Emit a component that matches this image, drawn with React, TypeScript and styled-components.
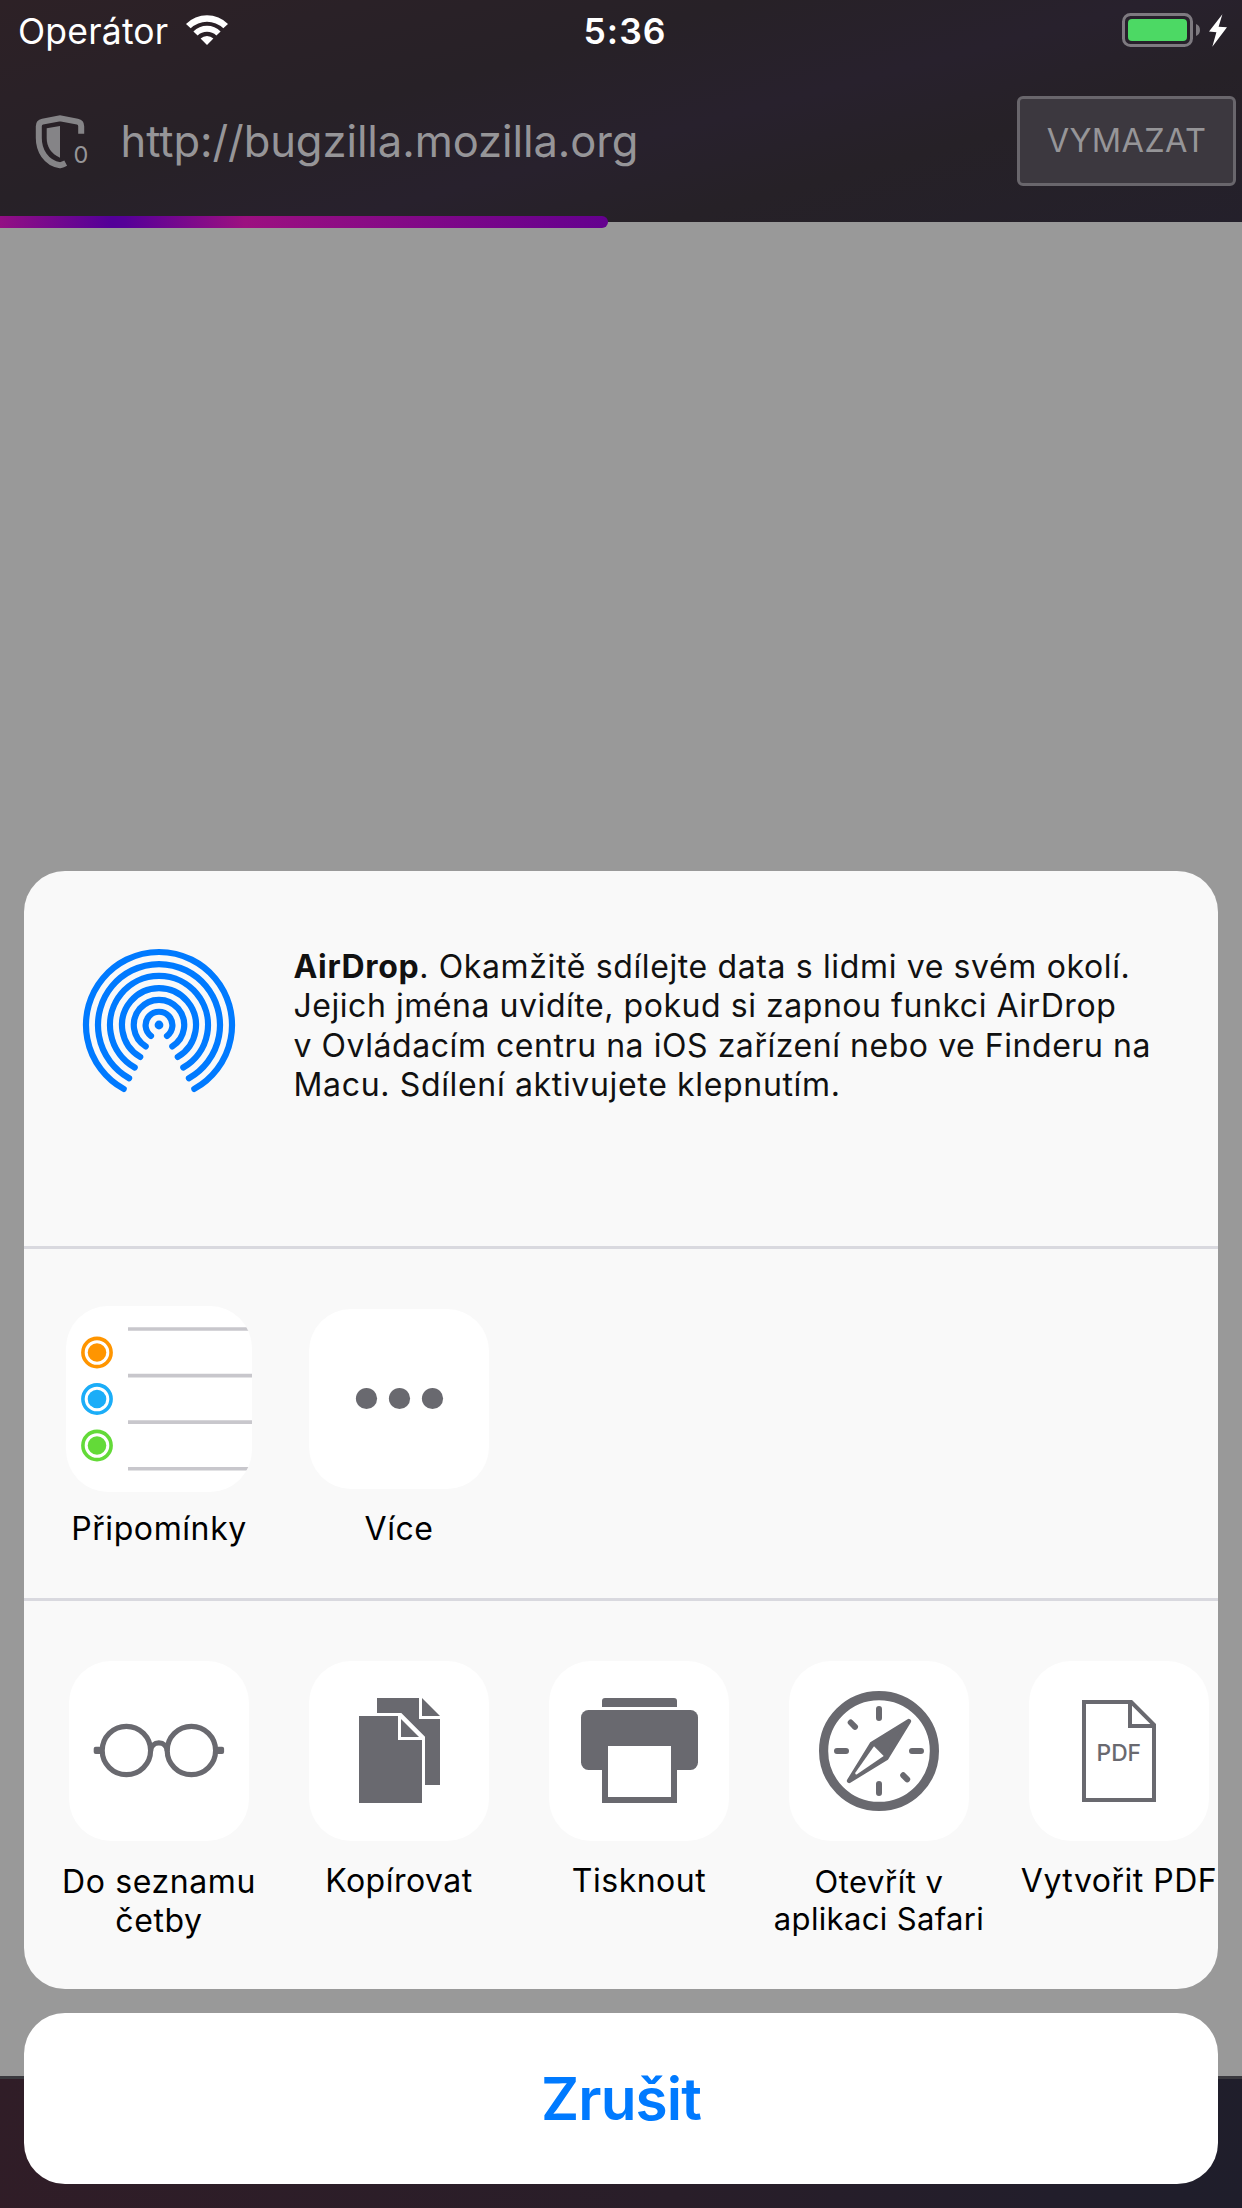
import React from "react";
import styled, { createGlobalStyle } from "styled-components";

const GlobalStyle = createGlobalStyle`
  *, *::before, *::after { box-sizing: border-box; }
  html, body { margin: 0; padding: 0; }
  body { width: 1242px; height: 2208px; overflow: hidden; background: #999; }
  button { appearance: none; border: 0; background: none; padding: 0; margin: 0; font: inherit; color: inherit; }
  svg { display: block; }
`;

const glyph = "#69696f";

const Screen = styled.div`
  position: relative;
  display: flex;
  flex-direction: column;
  width: 1242px;
  height: 2208px;
  overflow: hidden;
  background: #999999;
  font-family: Inter, Roboto, "Liberation Sans", sans-serif;
`;

const Header = styled.header`
  display: flex;
  flex-direction: column;
  flex: 0 0 222px;
  background: linear-gradient(165deg, #2d2126 0%, #2a2127 18%, #272127 36%, #28212d 56%, #262127 72%, #24202b 100%);
`;

const StatusBar = styled.div`
  display: grid;
  grid-template-columns: 1fr auto 1fr;
  height: 60px;
  padding: 0 14px 0 18px;
  color: #fff;
`;

const Carrier = styled.div`
  display: flex;
  align-items: flex-start;
  font-size: 35.5px;
  line-height: 44px;
  padding-top: 10px;
  letter-spacing: 0.2px;
  svg { margin: 4px 0 0 17px; }
`;

const CarrierName = styled.span`
  width: 150px;
  white-space: nowrap;
`;

const Clock = styled.div`
  padding: 10px 0 0 4px;
  font-size: 35.5px;
  line-height: 44px;
  font-weight: 600;
  letter-spacing: 1px;
`;

const Power = styled.div`
  display: flex;
  justify-content: flex-end;
  align-items: flex-start;
  padding-top: 13px;
`;

const UrlBar = styled.div`
  display: flex;
  align-items: center;
  height: 162px;
  padding: 0 6px 0 30px;
  color: #969598;
`;

const UrlText = styled.div`
  flex: 1;
  padding-left: 28.5px;
  font-size: 43.5px;
  line-height: 54px;
  letter-spacing: -0.07px;
`;

const EraseButton = styled.button`
  width: 219px;
  height: 90px;
  border: 3px solid #69666c;
  border-radius: 6px;
  background: #3c383f;
  color: #969598;
  font-size: 32.5px;
  line-height: 40px;
  letter-spacing: 0.3px;
`;

const Progress = styled.div`
  height: 12px;
  width: 608px;
  margin-top: -6px;
  border-radius: 0 6px 6px 0;
  background: linear-gradient(90deg, #930f84 0, #530098 112px, #560098 125px, #9c1080 245px, #64008f 608px);
`;

const PageBody = styled.main`
  flex: 1;
`;

const Toolbar = styled.footer`
  flex: 0 0 132px;
  border-top: 3px solid #3a393e;
  background: linear-gradient(100deg, #301d27 0%, #291e29 55%, #221e2b 85%, #1f1e2b 100%);
`;

const SheetLayer = styled.div`
  position: absolute;
  inset: 0;
  display: flex;
  flex-direction: column;
  justify-content: flex-end;
  gap: 24px;
  padding: 24px;
`;

const Sheet = styled.section`
  display: flex;
  flex-direction: column;
  height: 1118px;
  overflow: hidden;
  border-radius: 41px;
  background: #f9f9f9;
`;

const AirDropRow = styled.div`
  display: flex;
  align-items: flex-start;
  height: 378px;
  padding: 76px 0 0 57px;
  border-bottom: 3px solid #d9d9df;
`;

const AirDropCopy = styled.p`
  margin: 0 0 0 55.5px;
  font-size: 32px;
  line-height: 39.3px;
  color: #111;
  white-space: nowrap;
`;

const Line = styled.span<{ $track: number }>`
  display: block;
  letter-spacing: ${(p) => p.$track}px;
`;

const Row = styled.div<{ $height: number; $divider?: boolean }>`
  display: flex;
  height: ${(p) => p.$height}px;
  padding: 60px 0 0 15px;
  border-bottom: ${(p) => (p.$divider ? "3px solid #d9d9df" : "0")};
`;

const Item = styled.button`
  display: flex;
  flex: 0 0 240px;
  flex-direction: column;
  align-items: center;
`;

const Tile = styled.span<{ $large?: boolean }>`
  display: block;
  width: ${(p) => (p.$large ? 186 : 180)}px;
  height: ${(p) => (p.$large ? 186 : 180)}px;
  margin: ${(p) => (p.$large ? "-3px 0" : "0")};
  border-radius: 42px;
  overflow: hidden;
  background: #fff;
`;

const Label = styled.span<{ $size?: number; $leading?: number; $top?: number }>`
  margin-top: ${(p) => p.$top ?? 20}px;
  font-size: ${(p) => p.$size ?? 32}px;
  line-height: ${(p) => p.$leading ?? 39}px;
  color: #000;
  text-align: center;
  white-space: nowrap;
`;

const CancelButton = styled.button`
  height: 171px;
  border-radius: 41px;
  background: #fff;
  color: #007aff;
  font-size: 58.5px;
  line-height: 72px;
  font-weight: 600;
  letter-spacing: -0.9px;
`;

const WifiIcon = () => (
  <svg width="44" height="32" viewBox="185 14 44 32" fill="#fff">
    <path d="M186 24A29.8 29.8 0 0 1 228 24L223.3 28.2A23.8 23.8 0 0 0 190.7 28.2Z" />
    <path d="M193.4 31.4A19 19 0 0 1 220.6 31.4L216.4 35.4A13.6 13.6 0 0 0 197.6 35.4Z" />
    <path d="M200.6 38.6A9.2 9.2 0 0 1 213.4 38.6L207 45Z" />
  </svg>
);

const BatteryIcon = () => (
  <svg width="106" height="35" viewBox="1122 13 106 35">
    <rect x="1123.5" y="14.5" width="68" height="31" rx="7" fill="none" stroke="#7e7a80" strokeWidth="3" />
    <rect x="1128" y="19" width="59" height="22" rx="4" fill="#4cd964" />
    <path d="M1196 24C1201.300 25.500 1201.300 34.500 1196 36Z" fill="#7e7a80" />
    <path d="M1222.400 14.300L1218.600 26.700L1227 27.200L1212.300 46.700L1216.400 32.200L1209 31.400Z" fill="#fff" />
  </svg>
);

const ShieldIcon = () => (
  <svg width="62" height="60" viewBox="30 110 62 60">
    <path
      d="M81.200 132.800V125.200Q81.200 121.300 77.400 120.600L60 117.400L42.600 120.600Q38.800 121.300 38.800 125.200V137C38.800 149 45.500 162 60 164.300Q63 163.600 65.700 162.200"
      fill="none"
      stroke="#858487"
      strokeWidth="6"
    />
    <path d="M46.700 127.300L60 125V156.700C51 152.600 46.700 146 46.700 137Z" fill="#858487" />
    <text x="81" y="162" textAnchor="middle" fontSize="23.500" fill="#969598">0</text>
  </svg>
);

const airDropArcs: [number, number, number][] = [
  [13.4, 8, 10.9],
  [25.2, 13.3, 21.4],
  [37, 18.8, 31.9],
  [49, 24.3, 42.5],
  [61, 29.9, 53.2],
  [73, 35.3, 63.9],
];

const AirDropIcon = () => (
  <svg width="157" height="157" viewBox="-78 -78 157 157" fill="none" stroke="#007aff" strokeWidth="6.200" strokeLinecap="round">
    <circle r="4.400" fill="#007aff" stroke="none" />
    {airDropArcs.map(([r, x, y]) => (
      <path key={r} d={`M${-x} ${y}A${r} ${r} 0 1 1 ${x} ${y}`} />
    ))}
  </svg>
);

const reminderColors = ["#ff9500", "#1badf8", "#63da38"];

const RemindersIcon = () => (
  <svg width="186" height="186" viewBox="0 0 186 186">
    {[23, 69.6, 116.1, 162.7].map((y) => (
      <path key={y} d={`M62 ${y}H186`} stroke="#c8c7cc" strokeWidth="3.600" />
    ))}
    {reminderColors.map((color, i) => (
      <g key={color}>
        <circle cx="31" cy={46.5 + i * 46.5} r="14.100" fill="none" stroke={color} strokeWidth="3.600" />
        <circle cx="31" cy={46.5 + i * 46.5} r="9.300" fill={color} />
      </g>
    ))}
  </svg>
);

const MoreIcon = () => (
  <svg width="180" height="180" viewBox="0 0 180 180" fill={glyph}>
    <circle cx="57.500" cy="89.500" r="10.600" />
    <circle cx="90.500" cy="89.500" r="10.600" />
    <circle cx="123.500" cy="89.500" r="10.600" />
  </svg>
);

const GlassesIcon = () => (
  <svg width="180" height="180" viewBox="0 0 180 180" fill="none" stroke={glyph} strokeWidth="5.200">
    <circle cx="57.400" cy="89.500" r="24.200" />
    <circle cx="122.400" cy="89.500" r="24.200" />
    <path d="M81.500 90C82 85 85.300 81.800 89.900 81.800S97.800 85 98.300 90" />
    <rect x="24.700" y="85.700" width="8.500" height="7.400" rx="2" fill={glyph} stroke="none" />
    <rect x="146.600" y="85.700" width="8.500" height="7.400" rx="2" fill={glyph} stroke="none" />
  </svg>
);

const CopyIcon = () => (
  <svg width="180" height="180" viewBox="0 0 180 180" fill={glyph}>
    <path d="M68 37H110V58H131V124H116V75.700L92.300 52H68Z" />
    <path d="M113 37L131 55H113Z" />
    <path d="M50 55H89V79H113V142H50Z" />
    <path d="M92 58L110 76H92Z" />
  </svg>
);

const PrintIcon = () => (
  <svg width="180" height="180" viewBox="0 0 180 180" fill={glyph}>
    <path d="M53 46V40Q53 37 56 37H125Q128 37 128 40V46Z" />
    <rect x="32" y="49" width="117" height="60" rx="7.500" />
    <rect x="53" y="82" width="75" height="60" />
    <rect x="59" y="85" width="63" height="51" fill="#fff" />
  </svg>
);

const CompassIcon = () => (
  <svg width="180" height="180" viewBox="0 0 180 180" fill="none" stroke={glyph} strokeLinecap="round">
    <circle cx="90" cy="90" r="55.400" strokeWidth="9.200" />
    <path d="M90 48V57M90 123V132M48 90H57M123 90H132M61.700 61.500L66 65.800M114.200 114.300L118.200 118.300" strokeWidth="6" />
    <path
      d="M119.800 60.200L82.900 83L60.200 119.800L97.300 97Z"
      fill={glyph}
      strokeWidth="4.600"
      strokeLinejoin="round"
    />
    <path d="M85 85.200L94.700 95L68 113.300Q65.800 114 66.300 111.800Z" fill="#fff" stroke="none" />
  </svg>
);

const PdfIcon = () => (
  <svg width="180" height="180" viewBox="0 0 180 180">
    <path d="M55 41H102.200L125 63.800V139H55ZM101 41V65H125" fill="none" stroke={glyph} strokeWidth="4" />
    <text x="89.800" y="100" textAnchor="middle" fontSize="22.800" fontWeight="500" fill={glyph}>PDF</text>
  </svg>
);

export default function App() {
  return (
    <Screen>
      <GlobalStyle />
      <Header>
        <StatusBar>
          <Carrier>
            <CarrierName>Operátor</CarrierName>
            <WifiIcon />
          </Carrier>
          <Clock>5:36</Clock>
          <Power>
            <BatteryIcon />
          </Power>
        </StatusBar>
        <UrlBar>
          <ShieldIcon />
          <UrlText>http://bugzilla.mozilla.org</UrlText>
          <EraseButton>VYMAZAT</EraseButton>
        </UrlBar>
      </Header>
      <Progress />
      <PageBody />
      <Toolbar />
      <SheetLayer>
        <Sheet>
          <AirDropRow>
            <AirDropIcon />
            <AirDropCopy>
              <Line $track={0.63}><strong>AirDrop</strong>. Okamžitě sdílejte data s lidmi ve svém okolí.</Line>
              <Line $track={0.55}>Jejich jména uvidíte, pokud si zapnou funkci AirDrop</Line>
              <Line $track={0.55}>v Ovládacím centru na iOS zařízení nebo ve Finderu na</Line>
              <Line $track={0.66}>Macu. Sdílení aktivujete klepnutím.</Line>
            </AirDropCopy>
          </AirDropRow>
          <Row $height={352} $divider>
            <Item>
              <Tile $large><RemindersIcon /></Tile>
              <Label><Line $track={0.6}>Připomínky</Line></Label>
            </Item>
            <Item>
              <Tile><MoreIcon /></Tile>
              <Label><Line $track={0.5}>Více</Line></Label>
            </Item>
          </Row>
          <Row $height={388}>
            <Item>
              <Tile><GlassesIcon /></Tile>
              <Label $top={21}>
                <Line $track={0.6}>Do seznamu</Line>
                <Line $track={0.6}>četby</Line>
              </Label>
            </Item>
            <Item>
              <Tile><CopyIcon /></Tile>
              <Label><Line $track={0.5}>Kopírovat</Line></Label>
            </Item>
            <Item>
              <Tile><PrintIcon /></Tile>
              <Label><Line $track={0.5}>Tisknout</Line></Label>
            </Item>
            <Item>
              <Tile><CompassIcon /></Tile>
              <Label $size={31} $leading={37} $top={22}>
                <Line $track={0.5}>Otevřít v</Line>
                <Line $track={0.35}>aplikaci Safari</Line>
              </Label>
            </Item>
            <Item>
              <Tile><PdfIcon /></Tile>
              <Label><Line $track={0.5}>Vytvořit PDF</Line></Label>
            </Item>
          </Row>
        </Sheet>
        <CancelButton>Zrušit</CancelButton>
      </SheetLayer>
    </Screen>
  );
}
